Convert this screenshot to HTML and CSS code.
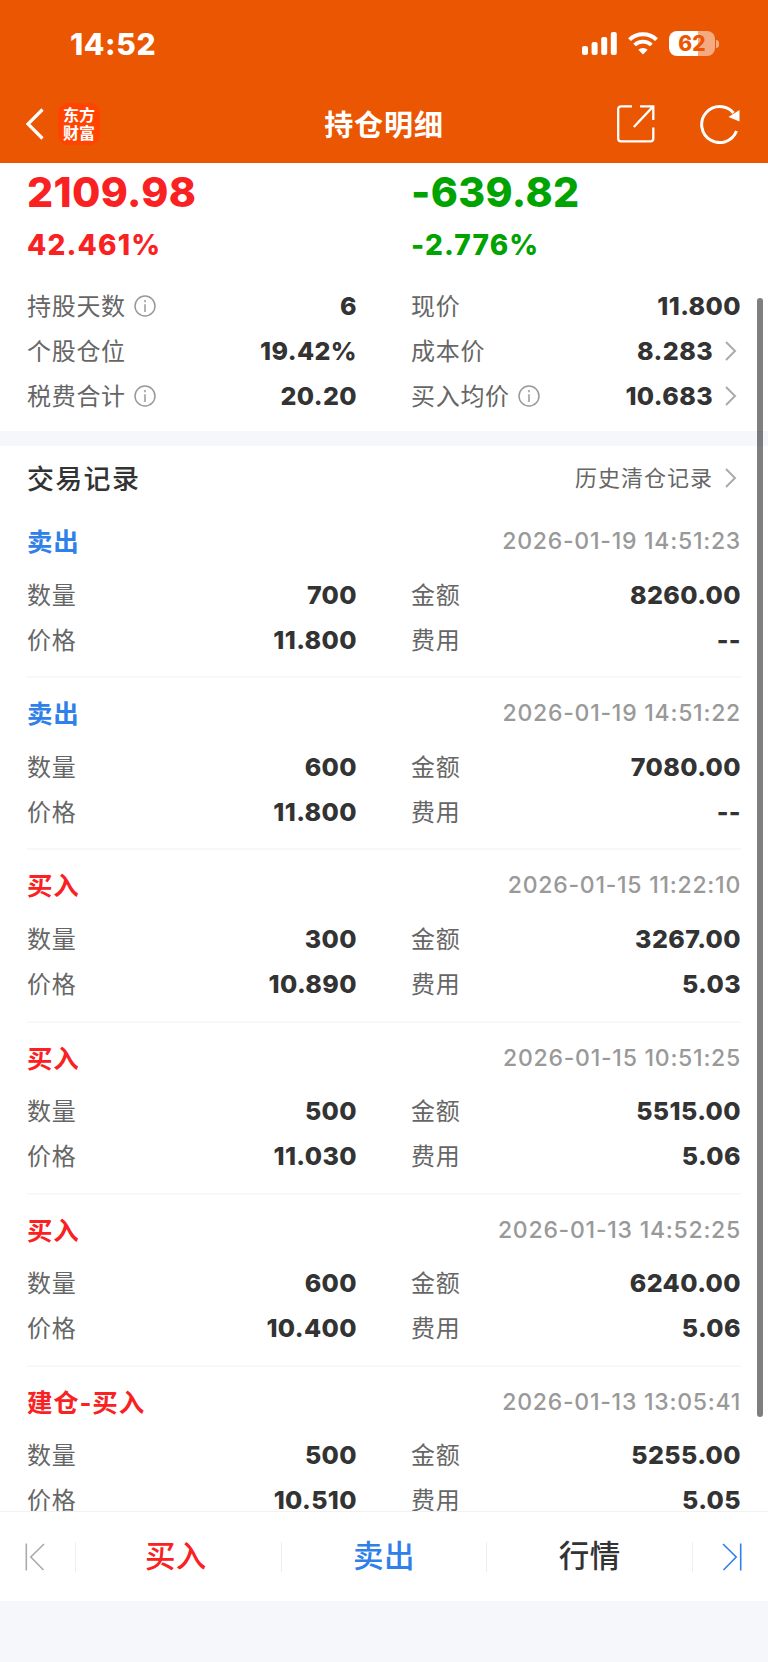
FILE: index.html
```html
<!DOCTYPE html>
<html lang="zh-CN">
<head>
    <meta charset="UTF-8">
    <meta name="viewport" content="width=device-width, initial-scale=1.0">
    <title>持仓明细</title>
    <link rel="stylesheet" href="styles.css">
</head>
<body>
    <header class="header">
        <div class="status-bar">
            <span class="time">14:52</span>
            <div class="status-icons">
                <svg class="signal" width="36" height="24" viewBox="0 0 36 24" fill="#fff">
                    <rect x="0" y="14" width="6" height="9" rx="2"/>
                    <rect x="9.6" y="10" width="6" height="13" rx="2"/>
                    <rect x="19.2" y="5" width="6" height="18" rx="2"/>
                    <rect x="28.8" y="0" width="6" height="23" rx="2"/>
                </svg>
                <svg class="wifi" width="30" height="23" viewBox="0 0 30 23" fill="none" stroke="#fff">
                    <path d="M1.5 7.6a19.5 19.5 0 0 1 27 0" stroke-width="4"/>
                    <path d="M6.6 13a12 12 0 0 1 16.8 0" stroke-width="3.8"/>
                    <path d="M15 22.6l-4.7-4.8a6.8 6.8 0 0 1 9.4 0z" fill="#fff" stroke="none"/>
                </svg>
                <div class="battery"><span>62</span></div>
                <i class="battery-tip"></i>
            </div>
        </div>
        <div class="nav">
            <div class="nav-left">
                <svg width="19" height="32" viewBox="0 0 19 32" fill="none" stroke="#fff" stroke-width="3.2">
                    <path d="M17.5 1.5L3 16l14.5 14.5"/>
                </svg>
                <div class="logo">东方<br>财富</div>
            </div>
            <h1>持仓明细</h1>
            <div class="nav-right">
                <svg width="40" height="40" viewBox="0 0 40 40" fill="none" stroke="#fff" stroke-width="2.3">
                    <path d="M16 2.3H5a2.8 2.8 0 0 0-2.8 2.8V34.5a2.8 2.8 0 0 0 2.8 2.8H34.5a2.8 2.8 0 0 0 2.8-2.8V23.5M24 2.3H37.3V16M37 2.6L17.8 23"/>
                </svg>
                <svg width="42" height="40" viewBox="0 0 42 40" fill="none" stroke="#fff" stroke-width="3">
                    <path d="M37.5 27a18 18 0 1 1-3-18"/>
                    <path d="M40.5 6v11.5L29.5 13z" fill="#fff" stroke="none"/>
                </svg>
            </div>
        </div>
    </header>

    <main class="content">
        <section class="summary">
            <div class="grid profit">
                <div class="red"><p class="amount">2109.98</p><p class="percent">42.461%</p></div>
                <div class="green"><p class="amount">-639.82</p><p class="percent">-2.776%</p></div>
            </div>
            <div class="grid">
                <div class="item"><span>持股天数</span><svg class="info" viewBox="0 0 22 22"><circle cx="11" cy="11" r="10"/><path d="M11 9.3V17M11 5v2.3"/></svg><b>6</b></div>
                <div class="item"><span>现价</span><b>11.800</b></div>
                <div class="item"><span>个股仓位</span><b>19.42%</b></div>
                <div class="item"><span>成本价</span><b>8.283</b><svg class="arrow" viewBox="0 0 12 20"><path d="M1 1l9 9-9 9"/></svg></div>
                <div class="item"><span>税费合计</span><svg class="info" viewBox="0 0 22 22"><circle cx="11" cy="11" r="10"/><path d="M11 9.3V17M11 5v2.3"/></svg><b>20.20</b></div>
                <div class="item"><span>买入均价</span><svg class="info" viewBox="0 0 22 22"><circle cx="11" cy="11" r="10"/><path d="M11 9.3V17M11 5v2.3"/></svg><b>10.683</b><svg class="arrow" viewBox="0 0 12 20"><path d="M1 1l9 9-9 9"/></svg></div>
            </div>
        </section>

        <section class="records">
            <div class="records-title">
                <h2>交易记录</h2>
                <a class="history"><span>历史清仓记录</span><svg class="arrow" viewBox="0 0 12 20"><path d="M1 1l9 9-9 9"/></svg></a>
            </div>

            <div class="record">
                <div class="record-head"><h3 class="blue">卖出</h3><time>2026-01-19 14:51:23</time></div>
                <div class="grid">
                    <div class="item"><span>数量</span><b>700</b></div>
                    <div class="item"><span>金额</span><b>8260.00</b></div>
                    <div class="item"><span>价格</span><b>11.800</b></div>
                    <div class="item"><span>费用</span><b>--</b></div>
                </div>
            </div>
            <div class="record">
                <div class="record-head"><h3 class="blue">卖出</h3><time>2026-01-19 14:51:22</time></div>
                <div class="grid">
                    <div class="item"><span>数量</span><b>600</b></div>
                    <div class="item"><span>金额</span><b>7080.00</b></div>
                    <div class="item"><span>价格</span><b>11.800</b></div>
                    <div class="item"><span>费用</span><b>--</b></div>
                </div>
            </div>
            <div class="record">
                <div class="record-head"><h3 class="red">买入</h3><time>2026-01-15 11:22:10</time></div>
                <div class="grid">
                    <div class="item"><span>数量</span><b>300</b></div>
                    <div class="item"><span>金额</span><b>3267.00</b></div>
                    <div class="item"><span>价格</span><b>10.890</b></div>
                    <div class="item"><span>费用</span><b>5.03</b></div>
                </div>
            </div>
            <div class="record">
                <div class="record-head"><h3 class="red">买入</h3><time>2026-01-15 10:51:25</time></div>
                <div class="grid">
                    <div class="item"><span>数量</span><b>500</b></div>
                    <div class="item"><span>金额</span><b>5515.00</b></div>
                    <div class="item"><span>价格</span><b>11.030</b></div>
                    <div class="item"><span>费用</span><b>5.06</b></div>
                </div>
            </div>
            <div class="record">
                <div class="record-head"><h3 class="red">买入</h3><time>2026-01-13 14:52:25</time></div>
                <div class="grid">
                    <div class="item"><span>数量</span><b>600</b></div>
                    <div class="item"><span>金额</span><b>6240.00</b></div>
                    <div class="item"><span>价格</span><b>10.400</b></div>
                    <div class="item"><span>费用</span><b>5.06</b></div>
                </div>
            </div>
            <div class="record">
                <div class="record-head"><h3 class="red">建仓-买入</h3><time>2026-01-13 13:05:41</time></div>
                <div class="grid">
                    <div class="item"><span>数量</span><b>500</b></div>
                    <div class="item"><span>金额</span><b>5255.00</b></div>
                    <div class="item"><span>价格</span><b>10.510</b></div>
                    <div class="item"><span>费用</span><b>5.05</b></div>
                </div>
            </div>
        </section>
        <div class="scrollbar"></div>
    </main>

    <footer class="tab-bar">
        <div class="tab-side">
            <svg class="prev" width="20" height="28" viewBox="0 0 20 28"><path d="M1.3 .5v27M19 1L5.8 14 18.5 27"/></svg>
        </div>
        <div class="tab tab-buy red">买入</div>
        <div class="tab blue">卖出</div>
        <div class="tab">行情</div>
        <div class="tab-side">
            <svg class="next" width="20" height="28" viewBox="0 0 20 28"><path d="M18.7 .5v27M1 1l13.2 13L1.5 27"/></svg>
        </div>
    </footer>
</body>
</html>
```
FILE: styles.css
```css
* {
    box-sizing: border-box;
    margin: 0;
    padding: 0;
}

body {
    display: flex;
    flex-direction: column;
    height: 1662px;
    font-family: Inter, "Noto Sans CJK SC", sans-serif;
    background: #f5f7fa;
    color: #333;
    overflow: hidden;
}

.red {
    color: #f92121;
}

.green {
    color: #00a300;
}

.blue {
    color: #2f80e8;
}

/* header */
.header {
    flex: none;
    height: 163px;
    background: #eb5602;
    color: #fff;
}

.status-bar {
    display: flex;
    justify-content: space-between;
    height: 87px;
    padding: 0 49px 0 70px;
    align-items: center;
}

.time {
    font-size: 30px;
    font-weight: 800;
    letter-spacing: 0.6px;
}

.status-icons {
    display: flex;
    align-items: center;
}

.wifi {
    margin: 0 11px 0 10px;
}

.battery {
    width: 46px;
    height: 25px;
    border-radius: 8px;
    background: linear-gradient(90deg, #fff 62%, #f5ab81 62%);
    color: #eb5602;
    font-size: 21px;
    font-weight: 800;
    line-height: 25px;
    text-align: center;
}

.battery-tip {
    width: 3px;
    height: 8px;
    margin-left: 1px;
    border-radius: 0 4px 4px 0;
    background: #f5ab81;
}

.nav {
    display: grid;
    grid-template-columns: 1fr auto 1fr;
    align-items: center;
    height: 76px;
    padding: 0 27px 2px 25px;
}

.nav-left {
    display: flex;
    align-items: center;
    gap: 14px;
}

.logo {
    width: 42px;
    height: 42px;
    padding-top: 2px;
    border-radius: 10px;
    background: #ff4300;
    font-family: "Noto Sans CJK SC", sans-serif;
    font-size: 16px;
    font-weight: 700;
    line-height: 18px;
    text-align: center;
}

.nav h1 {
    padding: 0 0 2px 2px;
    font-size: 29px;
    font-weight: 700;
    letter-spacing: 0.9px;
}

.nav-right {
    display: flex;
    justify-content: flex-end;
    gap: 43px;
}

/* position data */
.content {
    position: relative;
    flex: 1;
    min-height: 0;
    overflow: hidden;
    background: #fff;
}

.summary {
    height: 283px;
    padding: 4px 27px 0;
    border-bottom: 15px solid #f5f7fa;
}

.grid {
    display: grid;
    grid-template-columns: 1fr 1fr;
    column-gap: 54px;
}

.profit {
    height: 116px;
}

.amount {
    font-size: 41px;
    font-weight: 800;
    line-height: 50px;
    letter-spacing: 0.4px;
}

.percent {
    font-size: 28px;
    font-weight: 800;
    line-height: 56px;
    letter-spacing: 1.2px;
}

.item {
    display: flex;
    align-items: center;
    height: 45px;
}

.item span {
    padding-bottom: 3px;
    color: #666;
    font-size: 24px;
    letter-spacing: 0.7px;
}

.item b {
    margin-left: auto;
    font-size: 25px;
    font-weight: 800;
    letter-spacing: 0.4px;
}

.info {
    width: 22px;
    height: 22px;
    margin-left: 8px;
    fill: none;
    stroke: #999;
    stroke-width: 1.5;
}

.arrow {
    width: 12px;
    height: 20px;
    margin: 0 4px 0 12px;
    fill: none;
    stroke: #aaa;
    stroke-width: 2;
}

/* trade records */
.records {
    padding: 0 27px;
}

.records-title {
    display: flex;
    justify-content: space-between;
    align-items: center;
    height: 60px;
    padding-top: 3px;
}

.records-title h2 {
    font-size: 27px;
    font-weight: 500;
    letter-spacing: 1.3px;
}

.history {
    display: flex;
    align-items: center;
    color: #666;
    font-size: 22px;
    letter-spacing: 1px;
}

.history span {
    padding-bottom: 3px;
}

.record {
    height: 172.2px;
    border-bottom: 2px solid #f8f8f9;
}

.record-head {
    display: flex;
    justify-content: space-between;
    align-items: center;
    height: 66px;
    padding-top: 4px;
}

.record-head h3 {
    padding-bottom: 3px;
    font-size: 25.5px;
    font-weight: 700;
    letter-spacing: 0.8px;
}

.record-head time {
    color: #999;
    font-size: 23px;
    font-weight: 500;
    letter-spacing: 0.75px;
}

.scrollbar {
    position: absolute;
    top: 135px;
    right: 5px;
    width: 6px;
    height: 1119px;
    border-radius: 3px;
    background: rgba(0, 0, 0, 0.5);
}

/* bottom bar */
.tab-bar {
    display: flex;
    align-items: center;
    flex: none;
    height: 90px;
    margin-bottom: 61px;
    border-top: 1px solid #f2f2f2;
    background: #fff;
}

.tab-side {
    display: flex;
    justify-content: center;
    width: 75px;
}

.tab-side svg {
    fill: none;
    stroke-width: 1.6;
}

.prev {
    margin-right: 5px;
    stroke: #aaa;
}

.next {
    margin-left: 2px;
    stroke: #2f80ed;
}

.tab {
    flex: 1;
    height: 30px;
    border-left: 1px solid #eee;
    font-size: 30.5px;
    font-weight: 500;
    line-height: 28px;
    letter-spacing: 0.4px;
    text-align: center;
}

.tab-buy {
    text-indent: -5px;
}

.tab:nth-child(4) {
    border-right: 1px solid #eee;
}
```
